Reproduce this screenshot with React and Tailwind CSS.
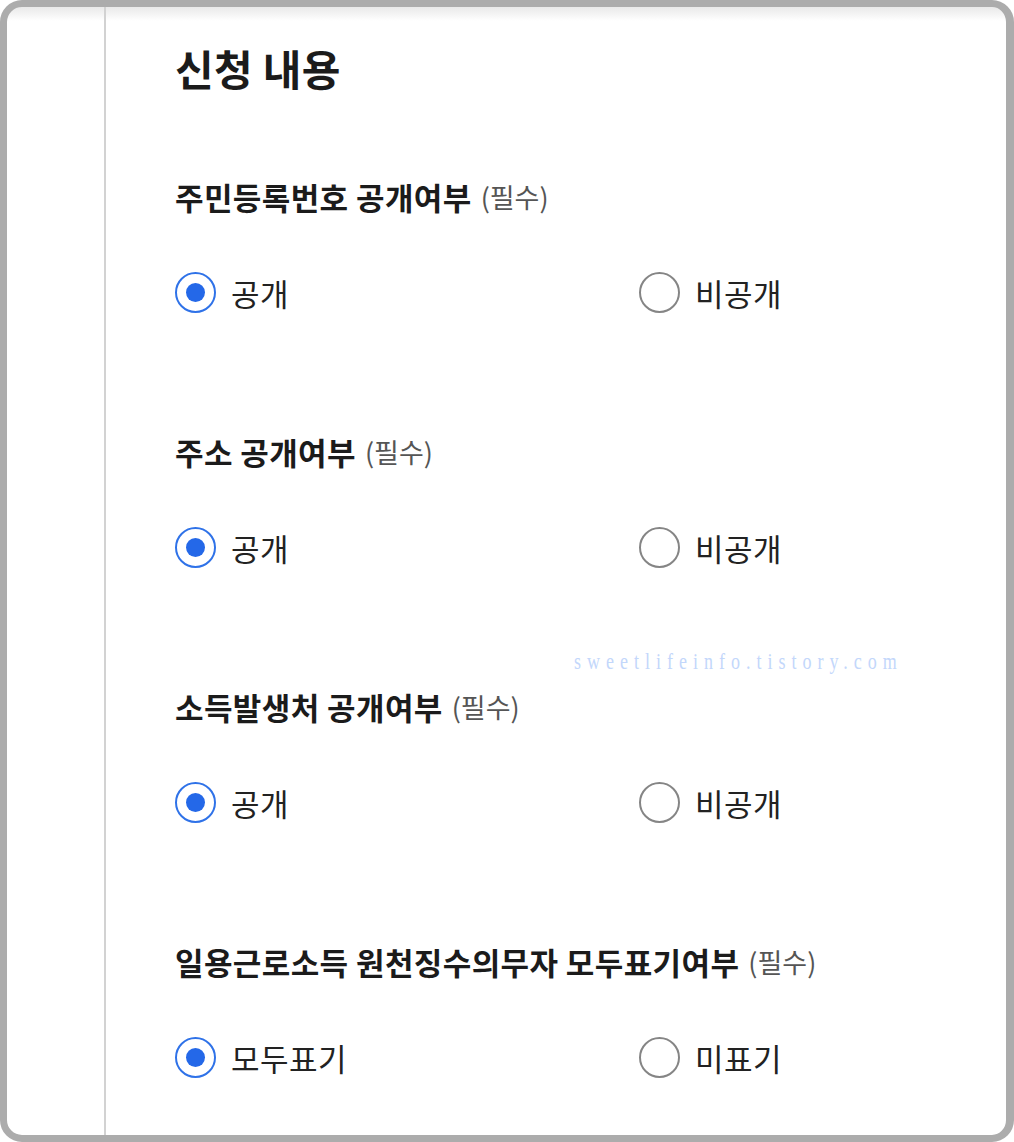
import React from "react";

const font = { fontFamily: '"Noto Sans CJK KR", "Noto Sans", sans-serif' };

function Radio({ checked, label }) {
  return (
    <div className="flex items-center gap-[15px]">
      {checked ? (
        <div className="w-[41px] h-[41px] rounded-full border-2 border-[#2f72e8] flex items-center justify-center">
          <div className="w-[19px] h-[19px] rounded-full bg-[#2468e8]" />
        </div>
      ) : (
        <div className="w-[41px] h-[41px] rounded-full border-2 border-[#858585]" />
      )}
      <span className="text-[31px] leading-[40px] tracking-[0.5px] text-[#222222] font-normal">{label}</span>
    </div>
  );
}

function Section({ title, a, b, first }) {
  return (
    <div className={first ? "mt-[86px]" : "mt-[119px]"}>
      <div className="h-[40px] flex items-center">
        <span className="text-[31px] font-bold text-[#1b1b1b] tracking-[0.4px]">{title}</span>
        <span className="ml-[9px] text-[27px] text-[#555555] font-normal">(필수)</span>
      </div>
      <div className="mt-[55px] grid grid-cols-[464px_1fr]">
        <Radio checked label={a} />
        <Radio label={b} />
      </div>
    </div>
  );
}

export default function App() {
  return (
    <div className="w-[1014px] h-[1142px] bg-white" style={font}>
      <div className="relative w-full h-full border-[#acacac] border-t-[7px] border-l-[7px] border-r-[8px] border-b-[7px] rounded-[22px] bg-[linear-gradient(to_bottom,#e9e9e9,#ffffff_14px)] flex overflow-hidden">
        <div className="w-[97px] shrink-0" />
        <div className="w-[2px] shrink-0 bg-[#d2d2d2]" />
        <div className="flex-1 pl-[69px] pt-[36px]">
          <h1 className="h-[48px] flex items-center text-[42px] font-bold text-[#1b1b1b] tracking-[0.3px]">신청 내용</h1>
          <Section first title="주민등록번호 공개여부" a="공개" b="비공개" />
          <Section title="주소 공개여부" a="공개" b="비공개" />
          <Section title="소득발생처 공개여부" a="공개" b="비공개" />
          <Section title="일용근로소득 원천징수의무자 모두표기여부" a="모두표기" b="미표기" />
        </div>
        <div
          className="absolute left-[567px] top-[636px] origin-left scale-x-75 text-[24px] tracking-[8px] text-[#c3d7fb] whitespace-nowrap"
          style={{ fontFamily: '"Liberation Serif", serif' }}
        >
          sweetlifeinfo.tistory.com
        </div>
      </div>
    </div>
  );
}
